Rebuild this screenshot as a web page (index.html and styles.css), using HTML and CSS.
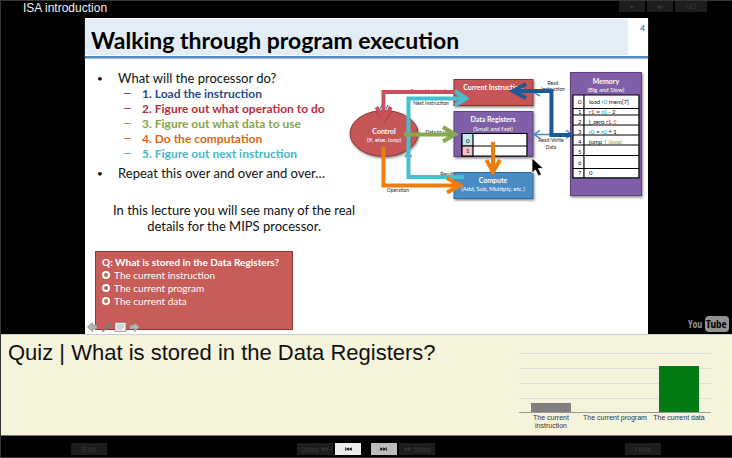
FILE: index.html
```html
<!DOCTYPE html>
<html lang="en">
<head>
<meta charset="utf-8">
<title>ISA introduction</title>
<link rel="stylesheet" href="styles.css">
</head>
<body>
<header class="topbar">
  <h1 class="lecture">ISA introduction</h1>
  <div class="group">
    <button class="btn" aria-label="Play"><svg class="glyph" viewBox="0 0 10 8"><path d="M3 1.500v5L7.500 4z"/></svg></button>
    <button class="btn" aria-label="Sound"><svg class="glyph" viewBox="0 0 10 8"><path d="M1 3h2l3-2.500v7L3 5H1z"/><path class="wave" d="M7 2.500q1.500 1.500 0 3M8.500 1.500q2 2.500 0 5"/></svg></button>
    <button class="btn btn-wide">HD</button>
  </div>
</header>

<main class="stage">
  <article class="slide">
    <header class="slide-head">
      <h2 class="slide-title">Walking through program execution</h2>
      <span class="slide-number">4</span>
    </header>
    <div class="slide-body">
      <div class="copy">
        <ul class="points">
          <li>What will the processor do?
            <ul class="steps">
              <li class="load">1. Load the instruction</li>
              <li class="decode">2. Figure out what operation to do</li>
              <li class="data">3. Figure out what data to use</li>
              <li class="compute">4. Do the computation</li>
              <li class="next">5. Figure out next instruction</li>
            </ul>
          </li>
          <li>Repeat this over and over and over…</li>
        </ul>
      </div>
      <svg class="diagram" viewBox="345 66 303 136" role="img" aria-label="Processor diagram">
        <defs>
          <filter id="shadow" x="-10%" y="-10%" width="125%" height="130%"><feDropShadow dx="1" dy="1.500" stdDeviation="1" flood-opacity=".45"/></filter>
        </defs>
        <g class="small" text-anchor="middle">
          <text x="431" y="93">Current Instruction</text>
          <text x="431" y="105">Next Instruction</text>
          <text x="438" y="134">Data to use</text>
          <text x="447" y="176">Result</text>
          <text x="398" y="192">Operation</text>
          <text x="553" y="85">Read</text>
          <text x="553" y="91">Instruction</text>
          <text x="551" y="142">Read/Write</text>
          <text x="551" y="149">Data</text>
        </g>

        <g filter="url(#shadow)">
          <ellipse cx="384" cy="133.500" rx="34" ry="23" fill="#c55654" stroke="#8b3432"/>
          <rect x="454" y="79.500" width="79" height="26" fill="#c55654" stroke="#8b3432"/>
          <rect x="454" y="111.500" width="79" height="45" fill="#7f5fa8" stroke="#5c437e"/>
          <rect x="454" y="172.500" width="79" height="26" fill="#4a8cc4" stroke="#2f6a9c"/>
          <rect x="570.500" y="72.500" width="71" height="123" fill="#7f5fa8" stroke="#5c437e"/>
        </g>

        <g class="node" text-anchor="middle">
          <text x="384" y="134">Control</text><text class="sub" x="384" y="142">(If, else, loop)</text>
          <text x="493" y="90">Current Instruction</text>
          <text x="493" y="122.500">Data Registers</text><text class="sub" x="493" y="131">(Small and fast)</text>
          <text x="493" y="183.500">Compute</text><text class="sub" x="493" y="191.500">(Add, Sub, Multiply, etc.)</text>
          <text x="606" y="84">Memory</text><text class="sub" x="606" y="92">(Big and Slow)</text>
        </g>

        <g stroke="#000" stroke-width="1.200" fill="#fff">
          <path d="M462 133.500h65v22.500h-65z"/>
          <path fill="#c4e8ee" d="M462 133.500h11v12.500h-11z"/>
          <path fill="#f3c4c9" d="M462 146h11v10h-11z"/>
          <path d="M473 146h54"/>
          <path d="M573 95h66v83h-66z"/>
          <path fill="none" d="M584 95v83M573 108.500h66M573 115h66M573 125h66M573 135h66M573 145h66M573 155.500h66M573 168.500h66"/>
        </g>
        <g class="cell">
          <text x="466" y="143">0</text><text x="466" y="153">1</text>
          <text x="578" y="104.500">0</text><text x="589" y="104.500">load <tspan fill="#159bb0">r0</tspan> mem[7]</text>
          <text x="578" y="114.500">1</text><text x="589" y="114.500"><tspan fill="#b51f2c">r1</tspan> = <tspan fill="#159bb0">r0</tspan> - 2</text>
          <text x="578" y="124">2</text><text x="589" y="124">j_zero <tspan fill="#b51f2c">r1</tspan> <tspan fill="#e8690b">5</tspan></text>
          <text x="578" y="134">3</text><text x="589" y="134"><tspan fill="#159bb0">r0</tspan> = <tspan fill="#159bb0">r0</tspan> + 1</text>
          <text x="578" y="144.500">4</text><text x="589" y="144.500">jump <tspan fill="#89a54e" font-style="italic">1 (loop)</tspan></text>
          <text x="578" y="154">5</text><text x="578" y="165">6</text>
          <text x="578" y="175">7</text><text x="589" y="175">0</text>
        </g>

        <g fill="none" stroke="#4a8cc4" stroke-width="1.500">
          <path d="M535 134.500h34M540 130.500l-6 4 6 4M566 130.500l6 4-6 4M540 90l-5 3 5 3M405 157l3.500-4 3 4M380 109l2-4M386 109l2-4"/>
        </g>
        <path fill="none" stroke="#8b3432" stroke-width="1" d="M376 111l8 12 8-12"/>
        <g fill="none" stroke-width="4">
          <path stroke="#c9525a" d="M476 92H383.500v26M376.500 107l7 13 7.500-13"/>
          <path stroke="#45c0d0" d="M464 177H408.500V98.500h56M455 91l11 7.500-11 7"/>
          <path stroke="#88a94d" d="M404 134.500h50M443 127l12 7.500-12 7"/>
          <path stroke="#ee7d0b" d="M383.500 147v38.500H459M447 178l13 7.500-13 7M493 142v28M486.500 160l6.500 12 7-12"/>
          <path stroke="#185b97" d="M514 91h37.500v44H572M526 84l-13 7 13 7"/>
        </g>
        <path d="M532 158v15l3.500-3 3 6 3-1.500-3-6h5z" fill="#000" stroke="#fff" stroke-width=".8"/>
      </svg>
    </div>
    <p class="summary">In this lecture you will see many of the real details for the MIPS processor.</p>
    <fieldset class="question">
      <legend class="question-title">Q: What is stored in the Data Registers?</legend>
      <label class="option"><input type="radio" name="answer">The current instruction</label>
      <label class="option"><input type="radio" name="answer">The current program</label>
      <label class="option"><input type="radio" name="answer">The current data</label>
    </fieldset>
    <svg class="slide-tools" viewBox="0 0 54 12" aria-hidden="true">
      <g fill="#b6b6b6" stroke="#858585" stroke-width=".7">
        <path d="M.5 6l5-4.500V4h4.500v4H5.500v2.500z"/>
        <path d="M52.500 6l-5-4.500V4H43v4h4.500v2.500z"/>
        <path fill="#777" d="M15 11l2-4 6-6 2 1.500-6 6z"/>
        <path fill="#eee" d="M28 1.500h11v9H28z"/>
      </g>
      <path stroke="#aaa" stroke-width=".8" d="M30 4h7M30 6h7M30 8h5"/>
    </svg>
  </article>
  <a class="youtube" href="#" aria-label="YouTube">
    <svg viewBox="0 0 42 18">
      <text class="you" x="0" y="13">You</text>
      <rect x="17" y="1" width="24" height="16" rx="4" fill="#929292"/>
      <text class="tube" x="18" y="13">Tube</text>
    </svg>
  </a>
</main>

<section class="quiz">
  <h2 class="quiz-title">Quiz | What is stored in the Data Registers?</h2>
  <div class="chart">
    <div class="plot">
      <div class="slot"><div class="bar" style="height:15%"></div></div>
      <div class="slot"></div>
      <div class="slot"><div class="bar correct" style="height:78%"></div></div>
    </div>
    <div class="labels"><span>The current instruction</span><span>The current program</span><span>The current data</span></div>
  </div>
</section>

<footer class="controls">
  <button class="btn btn-text">Exit</button>
  <div class="transport">
    <button class="btn btn-text">5sec <svg class="glyph" viewBox="0 0 10 8"><path d="M5 1.500v5L.5 4zM9.500 1.500v5L5 4z"/></svg></button>
    <button class="btn previous" aria-label="Previous"><svg class="glyph" viewBox="0 0 10 8"><path d="M1 1.500h1v5H1zM6 1.500v5L2 4zM10 1.500v5L6 4z"/></svg></button>
    <button class="btn following" aria-label="Next"><svg class="glyph" viewBox="0 0 10 8"><path d="M8 1.500h1v5H8zM4 1.500v5L8 4zM0 1.500v5L4 4z"/></svg></button>
    <button class="btn btn-text"><svg class="glyph" viewBox="0 0 10 8"><path d="M5 1.500v5L9.500 4zM.5 1.500v5L5 4z"/></svg> 5sec</button>
  </div>
  <button class="btn btn-text">Hide</button>
</footer>
</body>
</html>
```

FILE: styles.css
```css
* {
  box-sizing: border-box;
}

body {
  margin: 0;
  min-height: 100vh;
  display: grid;
  grid-template-rows: auto 1fr auto auto;
  background: #000;
  border: 1px solid #363636;
  border-right: 0;
  font-family: "Liberation Sans", Arial, sans-serif;
}

h1, h2, p, ul {
  margin: 0;
  padding: 0;
}

.topbar {
  display: flex;
  justify-content: space-between;
  align-items: flex-start;
  height: 17px;
  padding: 0 25px 0 22px;
}

.lecture {
  color: #f0f0f0;
  font-size: 12px;
  font-weight: 400;
  line-height: 14px;
}

.group {
  display: flex;
  gap: 2px;
}

.btn {
  display: flex;
  align-items: center;
  justify-content: center;
  gap: 2px;
  width: 26px;
  height: 11px;
  padding: 0;
  border: 0;
  background: #1d1d1d;
  color: #383838;
  font: 8px/11px "Liberation Sans", Arial, sans-serif;
}

.btn-wide {
  width: 32px;
}

.glyph {
  width: 8px;
  height: 6px;
  fill: currentColor;
}

.wave {
  fill: none;
  stroke: currentColor;
}

.stage {
  position: relative;
  display: flex;
  justify-content: center;
}

.slide {
  position: relative;
  width: 77%;
  background: #fff;
  color: #111;
  font-family: Lato, sans-serif;
}

.slide-head {
  display: flex;
  justify-content: space-between;
  height: 40px;
  padding-top: 1px;
  border-bottom: 2px solid #4a8cc4;
  box-shadow: 0 1px 1px #bbb;
}

.slide-title {
  flex: 1;
  height: 36px;
  padding-left: 6px;
  background: #e3edf5;
  color: #000;
  font-size: 23px;
  line-height: 42px;
  font-weight: 700;
}

.slide-number {
  width: 20px;
  padding-right: 3px;
  color: #3d78ad;
  font-size: 8px;
  font-weight: 700;
  line-height: 18px;
  text-align: right;
}

.slide-body {
  display: grid;
  grid-template-columns: 260fr 303fr;
  padding-top: 8px;
}

.points {
  padding: 4px 0 0 33px;
  font-size: 13px;
  line-height: 16px;
  white-space: nowrap;
}

.points > li {
  list-style: none;
}

.points > li::before {
  content: "•";
  float: left;
  margin-left: -21px;
  font-size: 10px;
}

.points > li + li {
  margin-top: 4px;
}

.steps {
  padding-left: 24px;
  font-size: 12px;
  font-weight: 700;
  line-height: 15px;
  list-style: none;
}

.steps li::before {
  content: "–";
  float: left;
  margin-left: -18px;
  font-family: "Liberation Sans", Arial, sans-serif;
  font-weight: 400;
}

.load { color: #1f4e87; }
.decode { color: #b52f3d; }
.data { color: #89a347; }
.compute { color: #de6710; }
.next { color: #48b8c8; }

.diagram {
  display: block;
  width: 100%;
}

.small {
  font-size: 5px;
  fill: #222;
}

.node {
  font-size: 7px;
  font-weight: 700;
  fill: #fff;
}

.sub {
  font-size: 6px;
  font-weight: 400;
}

.cell {
  font-size: 6px;
  fill: #111;
}

.summary {
  width: 264px;
  margin: 0 0 0 17px;
  font-size: 13px;
  line-height: 16px;
  text-align: center;
}

.question {
  width: 198px;
  height: 79px;
  margin: 17px 0 3px 10px;
  padding: 4px 6px;
  border: 1px solid #923432;
  background: #c75c58;
  color: #fff;
}

.question-title {
  float: left;
  width: 100%;
  padding: 0;
  font-size: 10px;
  font-weight: 700;
  line-height: 13px;
  white-space: nowrap;
}

.option {
  display: flex;
  clear: both;
  align-items: center;
  gap: 4px;
  font-size: 10px;
  line-height: 13px;
}

.option input {
  appearance: none;
  width: 8px;
  height: 8px;
  margin: 0;
  border: 2px solid #fff;
  border-radius: 50%;
}

.slide-tools {
  position: absolute;
  left: 2px;
  bottom: 1px;
  width: 54px;
}

.youtube {
  position: absolute;
  right: 2px;
  bottom: 1px;
  width: 42px;
}

.youtube svg {
  display: block;
}

.youtube text {
  font: 700 12px "Liberation Sans Narrow", "Open Sans Condensed", sans-serif;
}

.youtube .you {
  fill: #929292;
  font-size: 10px;
}

.youtube .tube {
  fill: #000;
  font-size: 11px;
}

.quiz {
  display: flex;
  justify-content: space-between;
  min-height: 102px;
  padding: 5px 21px 0 7px;
  background: #f6f3dd;
  border-top: 1px solid #ccc;
  border-bottom: 1px solid #777;
}

.quiz-title {
  color: #111;
  font-size: 22px;
  font-weight: 400;
  line-height: 26px;
}

.chart {
  width: 192px;
  padding-top: 13px;
}

.plot {
  display: grid;
  grid-template-columns: repeat(3, 1fr);
  height: 60px;
  border-bottom: 1px solid #999;
  background: repeating-linear-gradient(#ddd 0 1px, transparent 1px 15px);
}

.slot {
  display: flex;
  align-items: flex-end;
  justify-content: center;
}

.bar {
  width: 61%;
  background: #808080;
}

.correct {
  background: #047a14;
}

.labels {
  display: grid;
  grid-template-columns: repeat(3, 1fr);
  padding-top: 1px;
  color: #333;
  font-size: 7px;
  line-height: 8px;
  text-align: center;
}

.controls {
  display: flex;
  justify-content: space-between;
  align-items: center;
  height: 21px;
  padding: 5px 71px 0 70px;
}

.controls .btn {
  height: 12px;
}

.controls .btn-text {
  width: 36px;
}

.transport {
  display: flex;
  gap: 2px;
}

.controls .previous {
  background: #eee;
  color: #111;
}

.controls .following {
  margin-left: 8px;
  background: #bbb;
  color: #111;
}
```
